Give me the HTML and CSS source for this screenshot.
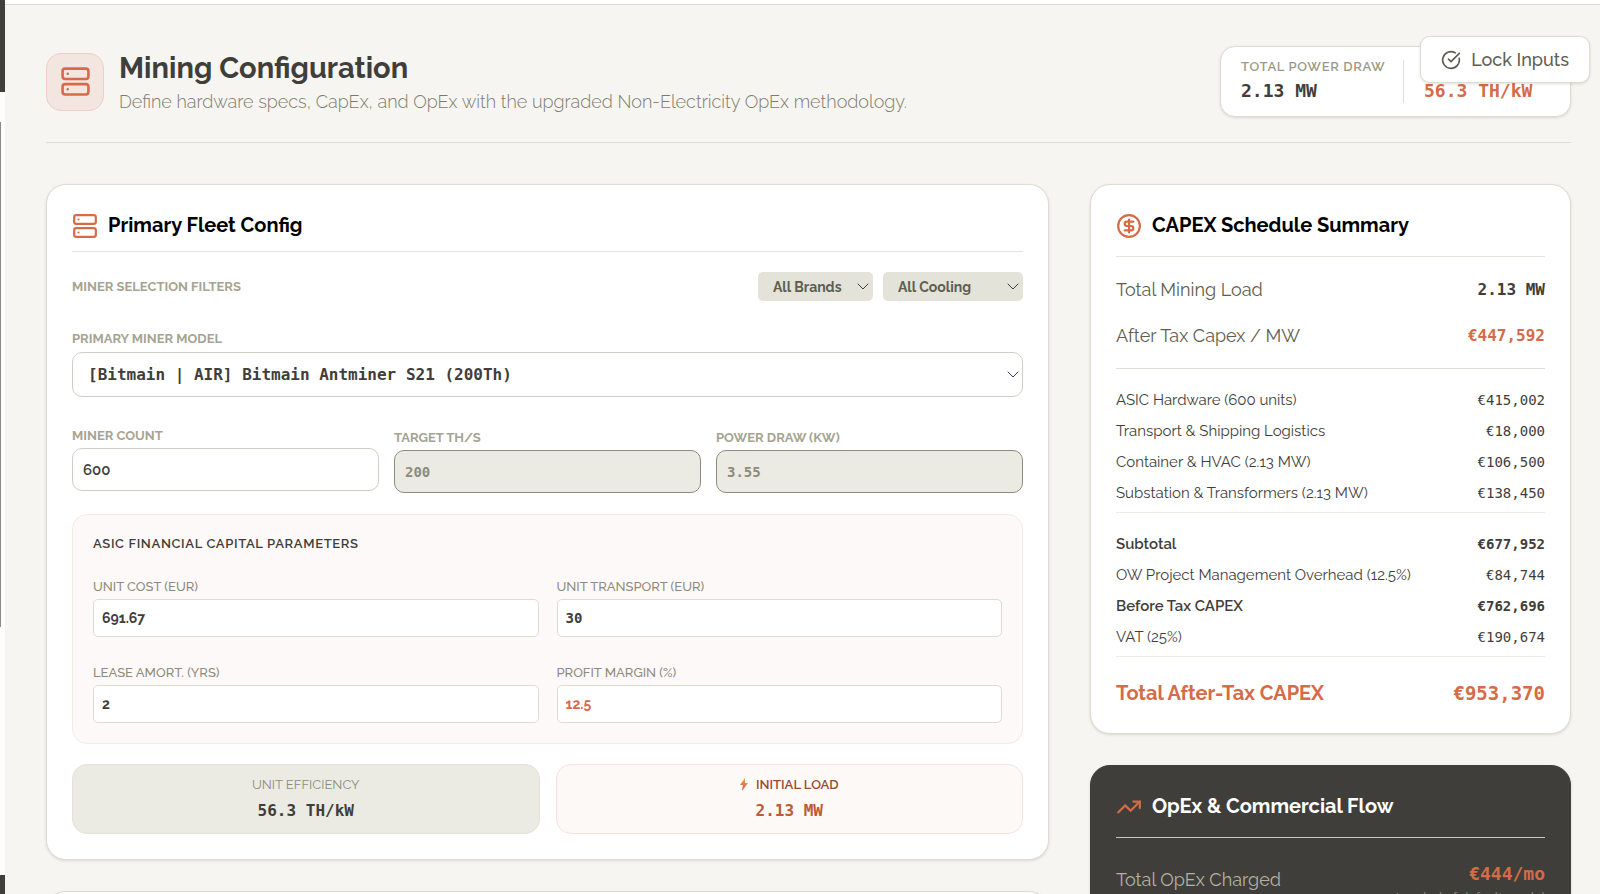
FILE: index.html
```
<!DOCTYPE html>
<html lang="en">
<head>
  <meta charset="UTF-8" />
  <meta name="viewport" content="width=device-width, initial-scale=1" />
  <title>Mining Configuration</title>
  <link rel="stylesheet" href="styles.css">
</head>
<body>
  <!-- collapsed sidebar -->
  <aside class="sidebar">
    <div class="sidebar-top"></div>
    <div class="sidebar-nav"></div>
    <div class="sidebar-bottom"></div>
  </aside>

  <div class="page">
    <div class="topbar"></div>

    <button type="button" class="lock-btn">
      <svg class="icon-sm" viewBox="0 0 24 24"><path d="M21.8 10A10 10 0 1 1 17 3.34" /><path d="m9 11 3 3L22 4" /></svg>
      Lock Inputs
    </button>

    <main>
      <header class="page-header">
        <div class="header-icon">
          <svg viewBox="0 0 24 24"><rect x="2" y="2" width="20" height="8" rx="2" /><rect x="2" y="14" width="20" height="8" rx="2" /><path d="M6 6h.01M6 18h.01" /></svg>
        </div>
        <div class="header-text">
          <h1>Mining Configuration</h1>
          <p>Define hardware specs, CapEx, and OpEx with the upgraded Non-Electricity OpEx methodology.</p>
        </div>
        <div class="stats">
          <div class="stat">
            <span class="stat-label">TOTAL POWER DRAW</span>
            <span class="stat-value">2.13 MW</span>
          </div>
          <div class="stat stat-right">
            <span class="stat-value accent">56.3 TH/kW</span>
          </div>
        </div>
      </header>

      <div class="grid">
        <div class="col-main">
          <section class="card">
            <h2 class="card-title">
              <svg class="icon" viewBox="0 0 24 24"><rect x="2" y="2" width="20" height="8" rx="2" /><rect x="2" y="14" width="20" height="8" rx="2" /><path d="M6 6h.01M6 18h.01" /></svg>
              Primary Fleet Config
            </h2>

            <div class="filters">
              <span class="label">MINER SELECTION FILTERS</span>
              <div class="select-wrap">
                <select class="filter filter-brand" aria-label="Brand"><option>All Brands</option></select>
                <svg class="chevron" viewBox="0 0 12 8"><path d="m1 1 5 5 5-5" /></svg>
              </div>
              <div class="select-wrap">
                <select class="filter filter-cooling" aria-label="Cooling"><option>All Cooling</option></select>
                <svg class="chevron" viewBox="0 0 12 8"><path d="m1 1 5 5 5-5" /></svg>
              </div>
            </div>

            <label class="label" for="model">PRIMARY MINER MODEL</label>
            <div class="select-wrap">
              <select id="model" class="model"><option>[Bitmain | AIR] Bitmain Antminer S21 (200Th)</option></select>
              <svg class="chevron" viewBox="0 0 12 8"><path d="m1 1 5 5 5-5" /></svg>
            </div>

            <div class="specs">
              <div class="spec">
                <label class="label" for="count">MINER COUNT</label>
                <input type="text" id="count" value="600" />
              </div>
              <div class="spec spec-locked">
                <label class="label" for="target">TARGET TH/S</label>
                <input type="text" id="target" value="200" readonly />
              </div>
              <div class="spec spec-locked">
                <label class="label" for="power">POWER DRAW (KW)</label>
                <input type="text" id="power" value="3.55" readonly />
              </div>
            </div>

            <div class="params">
              <h3>ASIC FINANCIAL CAPITAL PARAMETERS</h3>
              <div class="params-grid">
                <div>
                  <label for="cost">UNIT COST (EUR)</label>
                  <input type="text" id="cost" value="691.67" />
                </div>
                <div>
                  <label for="transport">UNIT TRANSPORT (EUR)</label>
                  <input type="text" id="transport" class="mono" value="30" />
                </div>
                <div>
                  <label for="lease">LEASE AMORT. (YRS)</label>
                  <input type="text" id="lease" value="2" />
                </div>
                <div>
                  <label for="margin">PROFIT MARGIN (%)</label>
                  <input type="text" id="margin" class="accent" value="12.5" />
                </div>
              </div>
            </div>

            <div class="tiles">
              <div class="tile">
                <span class="tile-label">UNIT EFFICIENCY</span>
                <span class="tile-value">56.3 TH/kW</span>
              </div>
              <div class="tile tile-load">
                <span class="tile-label">
                  <svg class="bolt" viewBox="0 0 8 13"><defs><linearGradient id="boltFill" x1="0" y1="0" x2="0" y2="1"><stop offset="0" stop-color="#f2a33c" /><stop offset="1" stop-color="#d9505a" /></linearGradient></defs><path d="M5 0 0 7h3L2 13l6-8H5z" fill="url(#boltFill)" /></svg>
                  INITIAL LOAD
                </span>
                <span class="tile-value">2.13 MW</span>
              </div>
            </div>
          </section>

          <section class="card card-next"></section>
        </div>

        <div class="col-side">
          <section class="card summary">
            <h2 class="card-title">
              <svg class="icon" viewBox="0 0 24 24"><circle cx="12" cy="12" r="10" /><path d="M16 8h-6a2 2 0 1 0 0 4h4a2 2 0 1 1 0 4H8M12 18V6" /></svg>
              CAPEX Schedule Summary
            </h2>
            <div class="row row-lg"><span>Total Mining Load</span><b>2.13 MW</b></div>
            <div class="row row-lg"><span>After Tax Capex / MW</span><b class="accent">€447,592</b></div>
            <div class="rows">
              <div class="row"><span>ASIC Hardware (600 units)</span><span class="mono">€415,002</span></div>
              <div class="row"><span>Transport &amp; Shipping Logistics</span><span class="mono">€18,000</span></div>
              <div class="row"><span>Container &amp; HVAC (2.13 MW)</span><span class="mono">€106,500</span></div>
              <div class="row"><span>Substation &amp; Transformers (2.13 MW)</span><span class="mono">€138,450</span></div>
            </div>
            <div class="rows rows-sub">
              <div class="row strong"><span>Subtotal</span><span class="mono">€677,952</span></div>
              <div class="row"><span>OW Project Management Overhead (12.5%)</span><span class="mono">€84,744</span></div>
              <div class="row strong"><span>Before Tax CAPEX</span><span class="mono">€762,696</span></div>
              <div class="row"><span>VAT (25%)</span><span class="mono">€190,674</span></div>
            </div>
            <div class="total accent"><span>Total After-Tax CAPEX</span><span class="mono">€953,370</span></div>
          </section>

          <section class="card dark">
            <h2 class="card-title">
              <svg class="icon" viewBox="0 0 24 24"><path d="M16 7h6v6" /><path d="m22 7-8.5 8.5-5-5L2 17" /></svg>
              OpEx &amp; Commercial Flow
            </h2>
            <div class="opex">
              <span>Total OpEx Charged</span>
              <div class="opex-value">
                <b class="accent">€444/mo</b>
                <small>Landed of default model</small>
              </div>
            </div>
          </section>
        </div>
      </div>
    </main>
  </div>
</body>
</html>
```
FILE: styles.css
```
* {
  box-sizing: border-box;
}
html, body {
  height: 100%;
}
body {
  margin: 0;
  display: flex;
  overflow: hidden;
  font-family: Raleway, Lato, "Open Sans", sans-serif;
  font-size: 15px;
  background: #f6f5f1;
  color: #3f3e3a;
}
h1, h2, h3, p {
  margin: 0;
}
svg {
  fill: none;
  stroke: currentColor;
  stroke-width: 2;
  stroke-linecap: round;
  stroke-linejoin: round;
}
input, select, button {
  font-family: inherit;
  color: inherit;
}
.mono, b, .stat-value, .tile-value {
  font-family: Consolas, "DejaVu Sans Mono", monospace;
}
.accent {
  color: #d56b47;
}

/* sidebar */
.sidebar {
  flex: none;
  width: 5px;
  height: 100vh;
  display: flex;
  flex-direction: column;
  background: #3f3e3a;
}
.sidebar-top {
  height: 92px;
}
.sidebar-nav {
  flex: 1;
  padding-top: 30px;
  background: #fdfdfd;
}
.sidebar-nav::before {
  content: "";
  display: block;
  width: 1px;
  height: 67%;
  background: #8b8b8b;
}
.sidebar-bottom {
  height: 19px;
}

.page {
  position: relative;
  flex: 1;
  height: 100vh;
  overflow: hidden;
}
.topbar {
  height: 5px;
  background: #fff;
  border-bottom: 1px solid #deddd4;
}
main {
  padding: 41px 29px 0 41px;
}
.lock-btn {
  position: absolute;
  top: 36px;
  right: 10px;
  height: 47px;
  padding: 0 20px;
  display: flex;
  align-items: center;
  gap: 10px;
  background: #fff;
  border: 1px solid #dddcd0;
  border-radius: 10px;
  box-shadow: 0 1px 3px rgba(0, 0, 0, 0.12);
  font-size: 18px;
  font-weight: 500;
  color: #5f5e50;
}
.icon-sm {
  width: 20px;
  height: 20px;
}

/* header */
.page-header {
  display: flex;
  align-items: center;
  padding-bottom: 25px;
  border-bottom: 1px solid #dfded4;
}
.header-icon {
  width: 58px;
  height: 58px;
  margin-right: 15px;
  display: flex;
  align-items: center;
  justify-content: center;
  background: #f3e5df;
  border: 1px solid #efcfc3;
  border-radius: 15px;
  color: #d56b47;
}
.header-icon svg {
  width: 31px;
  height: 31px;
}
.header-text {
  flex: 1;
}
h1 {
  font-size: 29px;
  line-height: 40px;
}
.header-text p {
  font-size: 18px;
  line-height: 28px;
  font-weight: 300;
  color: #7d7c6c;
}
.stats {
  display: flex;
  width: 351px;
  height: 71px;
  padding: 13px 20px;
  background: #fff;
  border: 1px solid #dddcd0;
  border-radius: 15px;
  box-shadow: 0 1px 3px rgba(0, 0, 0, 0.12);
}
.stat {
  flex: none;
  width: 162px;
}
.stat-right {
  display: flex;
  align-items: flex-end;
  width: auto;
  height: 43px;
  padding-left: 20px;
  border-left: 1px solid #dfded4;
}
.stat-label, .stat-value {
  display: block;
}
.stat-label {
  font-size: 13px;
  line-height: 13px;
  font-weight: 600;
  letter-spacing: 0.05em;
  color: #9b9a89;
}
.stat-value {
  margin-top: 6px;
  font-size: 18px;
  line-height: 24px;
  font-weight: 700;
}

/* cards */
.grid {
  display: grid;
  grid-template-columns: repeat(12, 1fr);
  column-gap: 41px;
  margin-top: 41px;
}
.col-main {
  grid-column: span 8;
}
.col-side {
  grid-column: span 4;
}
.card {
  padding: 25px;
  margin-bottom: 31px;
  background: #fff;
  border: 1px solid #dddcd0;
  border-radius: 20px;
  box-shadow: 0 1px 3px rgba(0, 0, 0, 0.12);
}
.card-next {
  height: 200px;
}
.card-title {
  display: flex;
  align-items: center;
  gap: 10px;
  height: 42px;
  padding-bottom: 10px;
  font-size: 20px;
  line-height: 31px;
  color: #000;
  border-bottom: 1px solid #e5e4da;
}
.icon {
  width: 26px;
  height: 26px;
  color: #d56b47;
}
.label {
  display: block;
  font-size: 13px;
  line-height: 20px;
  font-weight: 700;
  color: #a5a493;
}

/* filters */
.filters {
  display: flex;
  align-items: center;
  gap: 10px;
  margin: 20px 0 28px;
}
.filters .label {
  flex: 1;
}
.select-wrap {
  position: relative;
}
select {
  appearance: none;
  width: 100%;
}
.chevron {
  position: absolute;
  top: 50%;
  right: 4px;
  width: 12px;
  height: 8px;
  margin-top: -4px;
  stroke-width: 1;
  pointer-events: none;
}
.filter {
  height: 29px;
  padding: 0 15px;
  border: 0;
  border-radius: 5px;
  background: #e3e3d9;
  font-size: 14px;
  font-weight: 700;
  color: #5f5e50;
}
.filter-brand {
  width: 115px;
}
.filter-cooling {
  width: 140px;
}
.model {
  display: block;
  height: 45px;
  margin-top: 3px;
  padding: 0 15px;
  border: 1px solid #cfcec2;
  border-radius: 10px;
  background: #fff;
  font-family: Consolas, "DejaVu Sans Mono", monospace;
  font-size: 16px;
  font-weight: 700;
}

/* miner specs */
.specs {
  display: grid;
  grid-template-columns: repeat(3, 1fr);
  gap: 15px;
  margin-top: 29px;
}
.spec input {
  display: block;
  width: 100%;
  height: 43px;
  margin-top: 2px;
  padding: 0 10px;
  border: 1px solid #cfcec2;
  border-radius: 10px;
  font-size: 15px;
  font-weight: 600;
}
.spec-locked {
  padding-top: 2px;
}
.spec-locked input {
  font-family: Consolas, "DejaVu Sans Mono", monospace;
  font-size: 14px;
  font-weight: 700;
  border-color: #8d8c7c;
  background: #ebebe3;
  color: #8d8c7c;
}

/* financial parameters */
.params {
  margin-top: 21px;
  padding: 19px 20px 20px;
  background: #fdf9f8;
  border: 1px solid #f8e8e3;
  border-radius: 15px;
}
h3 {
  font-size: 13px;
  line-height: 20px;
  font-weight: 600;
  letter-spacing: 0.05em;
}
.params-grid {
  display: grid;
  grid-template-columns: 1fr 1fr;
  gap: 26px 18px;
  margin-top: 23px;
}
.params label {
  display: block;
  font-size: 13px;
  line-height: 20px;
  font-weight: 500;
  color: #8d8c7c;
}
.params input {
  display: block;
  width: 100%;
  height: 38px;
  margin-top: 2px;
  padding: 0 8px;
  border: 1px solid #dddcd0;
  border-radius: 5px;
  background: #fff;
  font-size: 14px;
  font-weight: 700;
}

/* tiles */
.tiles {
  display: grid;
  grid-template-columns: 1fr 1fr;
  gap: 16px;
  margin-top: 20px;
}
.tile {
  height: 70px;
  padding-top: 10px;
  text-align: center;
  background: #ebebe3;
  border: 1px solid #e3e3d9;
  border-radius: 15px;
}
.tile-label, .tile-value {
  display: block;
}
.tile-label {
  font-size: 13px;
  line-height: 20px;
  color: #8d8c7c;
}
.tile-value {
  margin-top: 4px;
  font-size: 16px;
  line-height: 24px;
  font-weight: 700;
}
.tile-load {
  background: #fdf9f7;
  border-color: #f5e2dc;
}
.tile-load .tile-label {
  font-weight: 600;
  color: #984a31;
}
.tile-load .tile-value {
  color: #bd5a38;
}
.bolt {
  width: 8px;
  height: 13px;
  margin-right: 5px;
  stroke: none;
  vertical-align: -2px;
}

/* capex summary */
.summary .card-title, .dark .card-title {
  height: 47px;
  padding-bottom: 15px;
  margin-bottom: 9px;
}
.row {
  display: flex;
  align-items: center;
  justify-content: space-between;
  height: 31px;
}
.row .mono {
  font-size: 14px;
}
.row-lg {
  height: 46px;
  font-size: 18px;
  color: #5f5e50;
}
.row-lg b {
  font-size: 16px;
}
.row-lg b:not(.accent) {
  color: #3f3e3a;
}
.rows {
  margin-top: 10px;
  padding: 15px 0 4px;
  border-top: 1px solid #dfded4;
  border-bottom: 1px solid #ebebe3;
}
.rows-sub {
  margin-top: 0;
  border-top: 0;
}
.strong {
  font-weight: 600;
}
.strong .mono {
  font-weight: 700;
}
.total {
  display: flex;
  align-items: center;
  justify-content: space-between;
  height: 76px;
  margin-bottom: -25px;
  padding-bottom: 4px;
  font-size: 20px;
  font-weight: 700;
}
.total .mono {
  font-size: 19px;
}

/* opex */
.dark {
  height: 400px;
  background: #3f3e3a;
  border-color: #3f3e3a;
}
.dark .card-title {
  color: #fff;
  border-color: #c9c8bc;
}
.opex {
  display: flex;
  align-items: flex-start;
  justify-content: space-between;
  padding-top: 14px;
  font-size: 18px;
  line-height: 38px;
  color: #b3b2a3;
}
.opex-value {
  text-align: right;
}
.opex-value b, .opex-value small {
  display: block;
}
.opex-value b {
  font-size: 18px;
  line-height: 26px;
}
.opex-value small {
  font-size: 13px;
  line-height: 22px;
  color: #8d8c7c;
}
```
